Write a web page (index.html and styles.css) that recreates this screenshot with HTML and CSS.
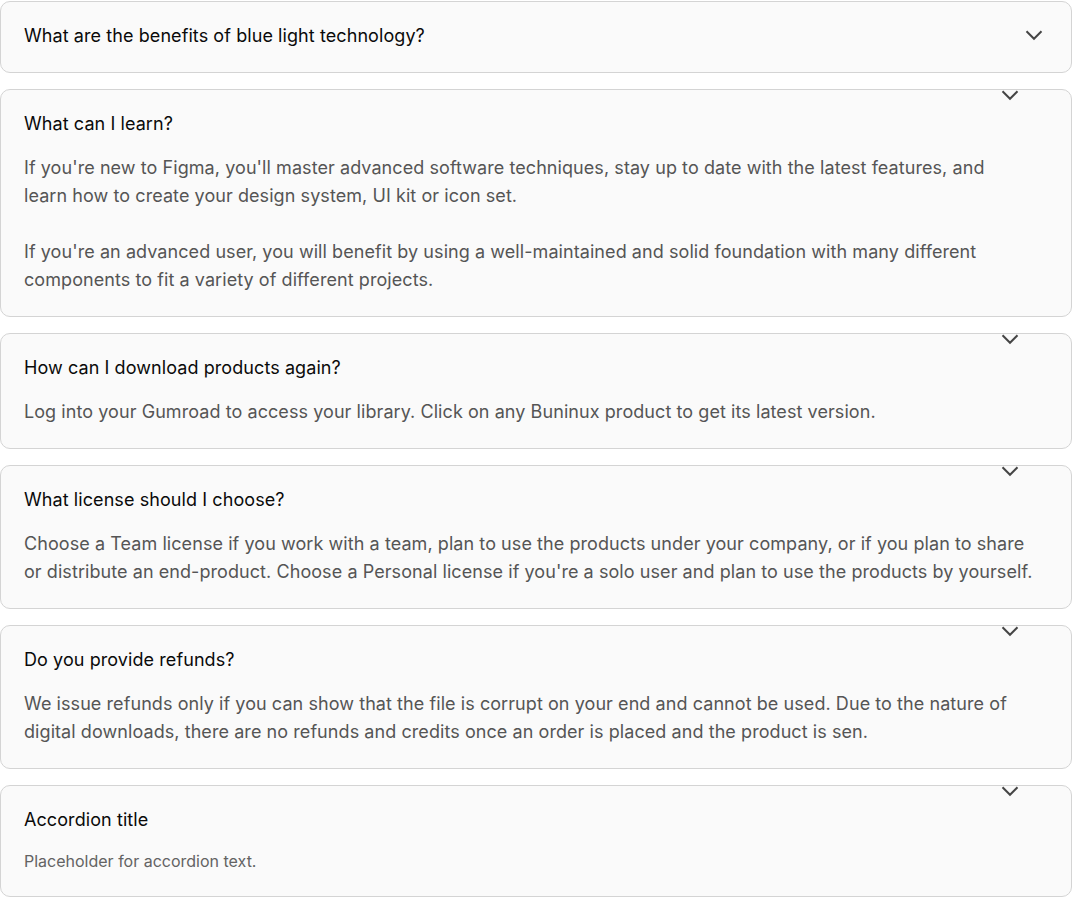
FILE: index.html
```html
<!DOCTYPE html>
<html lang="en">
<head>
<meta charset="utf-8">
<title>FAQ</title>
<link rel="stylesheet" href="styles.css">
</head>
<body>
<div class="faq">
  <div class="item">
    <div class="head head-collapsed">
      <span class="title">What are the benefits of blue light technology?</span>
      <svg class="chev" viewBox="0 0 24 24" width="24" height="24"><path d="M4.5 8.25 L12 15.75 L19.5 8.25"/></svg>
    </div>
  </div>

  <div class="item open">
    <svg class="chev chev-top" viewBox="0 0 24 24" width="24" height="24"><path d="M4.5 8.25 L12 15.75 L19.5 8.25"/></svg>
    <div class="head"><span class="title">What can I learn?</span></div>
    <div class="body">
      <p>If you're new to Figma, you'll master advanced software techniques, stay up to date with the latest features, and<br>learn how to create your design system, UI kit or icon set.</p>
      <p>If you're an advanced user, you will benefit by using a well-maintained and solid foundation with many different<br>components to fit a variety of different projects.</p>
    </div>
  </div>

  <div class="item open">
    <svg class="chev chev-top" viewBox="0 0 24 24" width="24" height="24"><path d="M4.5 8.25 L12 15.75 L19.5 8.25"/></svg>
    <div class="head"><span class="title">How can I download products again?</span></div>
    <div class="body">
      <p>Log into your Gumroad to access your library. Click on any Buninux product to get its latest version.</p>
    </div>
  </div>

  <div class="item open">
    <svg class="chev chev-top" viewBox="0 0 24 24" width="24" height="24"><path d="M4.5 8.25 L12 15.75 L19.5 8.25"/></svg>
    <div class="head"><span class="title">What license should I choose?</span></div>
    <div class="body">
      <p>Choose a Team license if you work with a team, plan to use the products under your company, or if you plan to share<br>or distribute an end-product. Choose a Personal license if you're a solo user and plan to use the products by yourself.</p>
    </div>
  </div>

  <div class="item open">
    <svg class="chev chev-top" viewBox="0 0 24 24" width="24" height="24"><path d="M4.5 8.25 L12 15.75 L19.5 8.25"/></svg>
    <div class="head"><span class="title">Do you provide refunds?</span></div>
    <div class="body">
      <p>We issue refunds only if you can show that the file is corrupt on your end and cannot be used. Due to the nature of<br>digital downloads, there are no refunds and credits once an order is placed and the product is sen.</p>
    </div>
  </div>

  <div class="item open item-small">
    <svg class="chev chev-top" viewBox="0 0 24 24" width="24" height="24"><path d="M4.5 8.25 L12 15.75 L19.5 8.25"/></svg>
    <div class="head"><span class="title">Accordion title</span></div>
    <div class="body body-small">
      <p>Placeholder for accordion text.</p>
    </div>
  </div>
</div>
</body>
</html>
```

FILE: styles.css
```css
* {
  box-sizing: border-box;
}

html, body {
  margin: 0;
  padding: 0;
  background: #ffffff;
}

body {
  font-family: "Inter", "Liberation Sans", sans-serif;
  width: 1072px;
}

.faq {
  display: flex;
  flex-direction: column;
  gap: 16px;
  padding-top: 1px;
}

.item {
  position: relative;
  width: 1072px;
  background: #fafafa;
  border: 1px solid #d4d4d4;
  border-radius: 10px;
  padding: 22px 0 24px 23px;
}

.item.open {
  padding-bottom: 22px;
}

.item.item-small {
  padding-bottom: 24px;
}

.head {
  display: flex;
  align-items: center;
  justify-content: space-between;
  padding-right: 25px;
}

.title {
  font-size: 18px;
  line-height: 24px;
  letter-spacing: 0.08px;
  color: #0a0a0a;
}

.chev {
  flex: none;
  fill: none;
  stroke: #454545;
  stroke-width: 2;
  stroke-linejoin: miter;
  stroke-linecap: butt;
}

.head-collapsed .chev {
  margin-top: -2px;
}

.chev-top {
  position: absolute;
  top: -7px;
  right: 49px;
}

.body {
  margin-top: 18px;
  padding-right: 10px;
  font-size: 18px;
  line-height: 28px;
  letter-spacing: 0.07px;
  color: #555555;
}

.body p {
  margin: 0;
}

.body p + p {
  margin-top: 28px;
}

.body-small {
  font-size: 16px;
  line-height: 22px;
  letter-spacing: 0;
  color: #636363;
}
```
